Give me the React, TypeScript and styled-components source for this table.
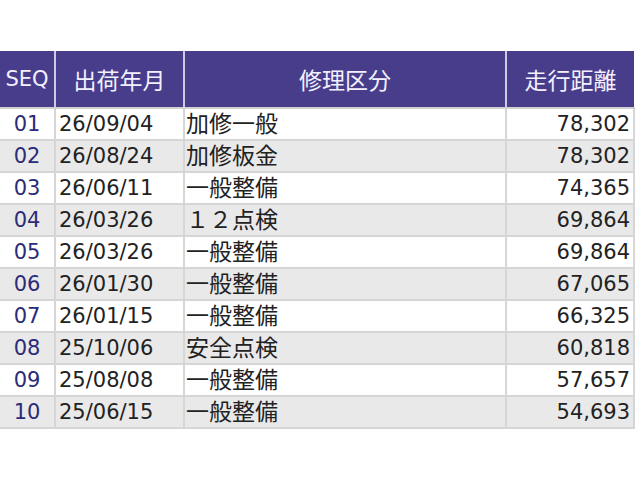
import React from "react";
import styled, { createGlobalStyle } from "styled-components";

const rows = [
  ["01", "26/09/04", "加修一般", "78,302"],
  ["02", "26/08/24", "加修板金", "78,302"],
  ["03", "26/06/11", "一般整備", "74,365"],
  ["04", "26/03/26", "１２点検", "69,864"],
  ["05", "26/03/26", "一般整備", "69,864"],
  ["06", "26/01/30", "一般整備", "67,065"],
  ["07", "26/01/15", "一般整備", "66,325"],
  ["08", "25/10/06", "安全点検", "60,818"],
  ["09", "25/08/08", "一般整備", "57,657"],
  ["10", "25/06/15", "一般整備", "54,693"],
];

function History() {
  return (
    <>
      <GlobalStyle />
      <Page>
        <Table>
          <colgroup>
            <col style={{ width: 55 }} />
            <col style={{ width: 129 }} />
            <col style={{ width: 322 }} />
            <col style={{ width: 128 }} />
          </colgroup>
          <thead>
            <tr>
              <HeadCell $latin>SEQ</HeadCell>
              <HeadCell>出荷年月</HeadCell>
              <HeadCell>修理区分</HeadCell>
              <HeadCell>走行距離</HeadCell>
            </tr>
          </thead>
          <tbody>
            {rows.map((r, i) => (
              <Row key={r[0]} $even={i % 2 === 1}>
                <SeqCell>{r[0]}</SeqCell>
                <Cell>{r[1]}</Cell>
                <Cell $kanji>{r[2]}</Cell>
                <Cell $align="right">{r[3]}</Cell>
              </Row>
            ))}
          </tbody>
        </Table>
      </Page>
    </>
  );
}

const GlobalStyle = createGlobalStyle`
  body {
    margin: 0;
    background: #ffffff;
    font-family: "DejaVu Sans", "Noto Sans CJK JP", sans-serif;
  }
`;

const Page = styled.div`
  padding-top: 51px;
`;

const Table = styled.table`
  width: 634px;
  border-collapse: collapse;
  table-layout: fixed;
  font-size: 21px;
`;

const HeadCell = styled.th<{ $latin?: boolean }>`
  height: 56px;
  padding: 0;
  background: #483d8b;
  color: #f2f0ff;
  font-weight: normal;
  font-size: ${(p) => (p.$latin ? "21px" : "23px")};
  text-align: center;
  border-left: 2px solid #cdc9e6;
  border-bottom: 2px solid #d0d0d0;
  &:first-child {
    border-left: none;
  }
`;

const Row = styled.tr<{ $even: boolean }>`
  background: ${(p) => (p.$even ? "#e9e9e9" : "#ffffff")};
`;

const Cell = styled.td<{ $align?: string; $kanji?: boolean }>`
  height: 30px;
  padding: 0 ${(p) => (p.$kanji ? "1px" : "3px")};
  color: #222222;
  font-size: ${(p) => (p.$kanji ? "23px" : "21px")};
  line-height: 1;
  text-align: ${(p) => p.$align || "left"};
  border: 2px solid #d6d6d6;
  border-top: none;
  white-space: nowrap;
  &:first-child {
    border-left: none;
  }
`;

const SeqCell = styled(Cell)`
  color: #2b2b7a;
  text-align: center;
`;

export default History;
